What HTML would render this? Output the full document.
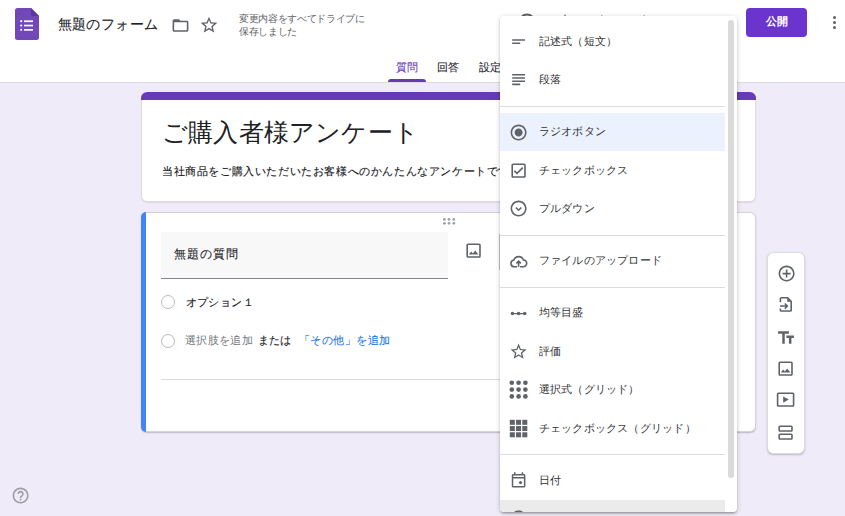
<!DOCTYPE html>
<html lang="ja">
<head>
<meta charset="utf-8">
<style>
*{box-sizing:border-box;margin:0;padding:0}
html,body{width:845px;height:516px;overflow:hidden}
body{position:relative;background:#f0ebf8;font-family:"Liberation Sans",sans-serif;color:#202124}
.abs{position:absolute}
#hdr{left:0;top:0;width:845px;height:83px;background:#fff;border-bottom:1px solid #dadce0}
.t{position:absolute;white-space:nowrap;line-height:1}
.card{position:absolute;background:#fff;border-radius:6px;border:1px solid #dadce0}
svg{position:absolute;display:block}
.ic{fill:#5f6368}
</style>
</head>
<body>
<div id="hdr" class="abs">
  <!-- forms logo -->
  <svg style="left:15px;top:8px" width="24" height="32" viewBox="0 0 24 32">
    <path d="M2.5 0H16L24 8V29.5A2.5 2.5 0 0 1 21.5 32H2.5A2.5 2.5 0 0 1 0 29.5V2.5A2.5 2.5 0 0 1 2.5 0Z" fill="#7248b9"/>
    <path d="M16 0L24 8H17.5A1.5 1.5 0 0 1 16 6.5Z" fill="#5a379e"/>
    <circle cx="6.2" cy="13.2" r="1.1" fill="#fff"/>
    <circle cx="6.2" cy="17.5" r="1.1" fill="#fff"/>
    <circle cx="6.2" cy="21.8" r="1.1" fill="#fff"/>
    <rect x="9" y="12.4" width="9" height="1.7" fill="#fff"/>
    <rect x="9" y="16.7" width="9" height="1.7" fill="#fff"/>
    <rect x="9" y="21" width="9" height="1.7" fill="#fff"/>
  </svg>
  <div class="t" style="left:57.8px;top:17px;font-size:14.4px;letter-spacing:0.35px;color:#202124;-webkit-text-stroke:0.1px #202124">無題のフォーム</div>
  <!-- folder -->
  <svg style="left:170.6px;top:15.6px" width="19" height="19" viewBox="0 0 24 24"><path class="ic" d="M20 6h-8l-2-2H4c-1.1 0-1.99.9-1.99 2L2 18c0 1.1.9 2 2 2h16c1.1 0 2-.9 2-2V8c0-1.1-.9-2-2-2zm0 12H4V8h16v10z"/></svg>
  <!-- star -->
  <svg style="left:199px;top:14.5px" width="20" height="20" viewBox="0 0 24 24"><path class="ic" d="M22 9.24l-7.19-.62L12 2 9.19 8.63 2 9.24l5.46 4.73L5.82 21 12 17.27 18.18 21l-1.63-7.03L22 9.24zM12 15.4l-3.76 2.27 1-4.28-3.32-2.88 4.38-.38L12 6.1l1.71 4.04 4.38.38-3.32 2.88 1 4.28L12 15.4z"/></svg>
  <div class="t" style="left:239px;top:11.7px;font-size:9.6px;letter-spacing:-0.33px;line-height:13px;color:#5f6368">変更内容をすべてドライブに<br>保存しました</div>
  <!-- tabs -->
  <div class="t" style="left:396px;top:61.7px;font-size:11.2px;color:#673ab7;-webkit-text-stroke:0.1px #673ab7">質問</div>
  <div class="t" style="left:437px;top:61.7px;font-size:11.2px;color:#202124;-webkit-text-stroke:0.1px #202124">回答</div>
  <div class="t" style="left:479px;top:61.7px;font-size:11.2px;color:#202124;-webkit-text-stroke:0.1px #202124">設定</div>
  <div class="abs" style="left:388px;top:79px;width:38px;height:3px;background:#673ab7;border-radius:3px 3px 0 0"></div>
  <svg style="left:515px;top:10px" width="130" height="8" viewBox="0 0 130 8"><circle cx="12" cy="12" r="7.5" fill="none" stroke="#5f6368" stroke-width="1.8"/><rect x="49" y="4.6" width="2" height="1.6" fill="#9aa0a6"/><rect x="86" y="4.8" width="1.5" height="1.4" fill="#bdc1c6"/><rect x="128.5" y="4.8" width="1.5" height="1.4" fill="#bdc1c6"/></svg>
  <!-- publish -->
  <div class="abs" style="left:746px;top:8px;width:61px;height:29px;background:#6b34cf;border-radius:4px"></div>
  <div class="t" style="left:766px;top:16.4px;font-size:11.2px;font-weight:bold;color:#fff">公開</div>
  <!-- more -->
  <div class="abs" style="left:832.5px;top:15.5px;width:3.5px;height:3.5px;border-radius:50%;background:#5f6368"></div>
  <div class="abs" style="left:832.5px;top:20.5px;width:3.5px;height:3.5px;border-radius:50%;background:#5f6368"></div>
  <div class="abs" style="left:832.5px;top:25.5px;width:3.5px;height:3.5px;border-radius:50%;background:#5f6368"></div>
</div>

<!-- title card -->
<div class="card" style="left:141px;top:92px;width:615.2px;height:109.8px;box-shadow:0 0.5px 1px rgba(0,0,0,.08)"></div>
<div class="abs" style="left:141px;top:92px;width:615.2px;height:8px;background:#673ab7;border-radius:6.4px 6.4px 0 0"></div>
<div class="t" style="left:162px;top:119.5px;font-size:25.3px;letter-spacing:0.2px">ご購入者様アンケート</div>
<div class="t" style="left:162px;top:165.9px;font-size:11.4px;letter-spacing:0.6px;-webkit-text-stroke:0.15px #202124">当社商品をご購入いただいたお客様へのかんたんなアンケートです。</div>

<!-- question card -->
<div class="card" style="left:141px;top:211.8px;width:615.2px;height:220.4px;border-color:#d3d3d8;box-shadow:0 1px 1.5px rgba(0,0,0,.22)"></div>
<div class="abs" style="left:141px;top:211.8px;width:5px;height:220.4px;background:#4285f4;border-radius:6.4px 0 0 6.4px"></div>


<div class="abs" style="left:161px;top:232px;width:287px;height:47px;background:#f8f8f8;border-bottom:1px solid #80868b"></div>
<div class="t" style="left:173.5px;top:248px;font-size:12.4px;letter-spacing:1px;-webkit-text-stroke:0.1px #202124">無題の質問</div>
<!-- drag handle -->
<svg style="left:441px;top:217px" width="16" height="9" viewBox="0 0 16 9">
  <g fill="#9aa0a6"><circle cx="3.4" cy="2.4" r="1.35"/><circle cx="8" cy="2.4" r="1.35"/><circle cx="12.8" cy="2.4" r="1.35"/><circle cx="3.4" cy="6.3" r="1.35"/><circle cx="8" cy="6.3" r="1.35"/><circle cx="12.8" cy="6.3" r="1.35"/></g>
</svg>
<!-- image icon -->
<svg style="left:464px;top:241px" width="19.2" height="19.2" viewBox="0 0 24 24"><path class="ic" d="M19 3H5c-1.1 0-2 .9-2 2v14c0 1.1.9 2 2 2h14c1.1 0 2-.9 2-2V5c0-1.1-.9-2-2-2zm0 16H5V5h14v14zm-5-7l-3 3.72L9 13l-3 4h12l-4-5z"/></svg>
<!-- radio options -->
<div class="abs" style="left:160.8px;top:294.8px;width:14.4px;height:14.4px;border:1.5px solid #bababa;border-radius:50%"></div>
<div class="t" style="left:185.5px;top:296.8px;font-size:11.2px;letter-spacing:0.42px;-webkit-text-stroke:0.12px #202124">オプション１</div>
<div class="abs" style="left:160.8px;top:333.6px;width:14.4px;height:14.4px;border:1.5px solid #bababa;border-radius:50%"></div>
<div class="t" style="left:185px;top:335.3px;font-size:11.2px;letter-spacing:0.35px;color:#70757a">選択肢を追加</div>
<div class="t" style="left:258px;top:335.3px;font-size:11.2px;-webkit-text-stroke:0.12px #202124">または</div>
<div class="t" style="left:299px;top:335.3px;font-size:11.2px;letter-spacing:0.43px;color:#1a73e8;-webkit-text-stroke:0.1px #1a73e8">「その他」を追加</div>
<div class="abs" style="left:161px;top:379px;width:575px;height:1px;background:#dadce0"></div>

<!-- help -->
<svg style="left:11px;top:485.5px" width="19.2" height="19.2" viewBox="0 0 24 24"><path fill="#9e9fa4" d="M11 18h2v-2h-2v2zm1-16C6.48 2 2 6.48 2 12s4.48 10 10 10 10-4.48 10-10S17.52 2 12 2zm0 18c-4.41 0-8-3.59-8-8s3.59-8 8-8 8 3.59 8 8-3.59 8-8 8zm0-14c-2.21 0-4 1.79-4 4h2c0-1.1.9-2 2-2s2 .9 2 2c0 2-3 1.75-3 5h2c0-2.25 3-2.5 3-5 0-2.21-1.79-4-4-4z"/></svg>

<!-- side toolbar -->
<div class="card" style="left:766.6px;top:252.4px;width:38.7px;height:201.6px;border-radius:6.4px;box-shadow:0 1px 2px rgba(60,64,67,.3)"></div>
<svg style="left:776.6px;top:263.5px" width="19.2" height="19.2" viewBox="0 0 24 24"><path class="ic" d="M13 7h-2v4H7v2h4v4h2v-4h4v-2h-4V7zm-1-5C6.49 2 2 6.49 2 12s4.49 10 10 10 10-4.49 10-10S17.51 2 12 2zm0 18c-4.41 0-8-3.59-8-8s3.59-8 8-8 8 3.59 8 8-3.59 8-8 8z"/></svg>
<svg style="left:776.4px;top:295.4px" width="19.2" height="19.2" viewBox="0 0 24 24"><g fill="none" stroke="#5f6368" stroke-width="2"><path d="M5.5 9.2V4.5a1 1 0 0 1 1-1H14.5L19 8V19a1 1 0 0 1-1 1H6.5a1 1 0 0 1-1-1V16.8"/><path d="M5 13.8H14.2M11 10.6L14.2 13.8 11 17"/></g><path d="M14 3.5V8.5H19Z" fill="#5f6368"/></svg>
<svg style="left:776px;top:327.8px" width="20" height="20" viewBox="0 0 24 24"><path class="ic" d="M2.5 4v3h5v12h3V7h5V4h-13zm19 5h-9v3h3v7h3v-7h3V9z"/></svg>
<svg style="left:776.4px;top:359.4px" width="19.2" height="19.2" viewBox="0 0 24 24"><path class="ic" d="M19 3H5c-1.1 0-2 .9-2 2v14c0 1.1.9 2 2 2h14c1.1 0 2-.9 2-2V5c0-1.1-.9-2-2-2zm0 16H5V5h14v14zm-5-7l-3 3.72L9 13l-3 4h12l-4-5z"/></svg>
<svg style="left:776.4px;top:390.4px" width="19.2" height="19.2" viewBox="0 0 24 24"><path class="ic" d="M21 3H3c-1.1 0-2 .9-2 2v14c0 1.1.9 2 2 2h18c1.1 0 2-.9 2-2V5c0-1.1-.9-2-2-2zm0 16H3V5h18v14zM9 8v8l7-4z"/></svg>
<svg style="left:776.4px;top:423.4px" width="19.2" height="19.2" viewBox="0 0 24 24"><path class="ic" d="M19 13H5c-1.1 0-2 .9-2 2v4c0 1.1.9 2 2 2h14c1.1 0 2-.9 2-2v-4c0-1.1-.9-2-2-2zm0 6H5v-4h14v4zm0-16H5c-1.1 0-2 .9-2 2v4c0 1.1.9 2 2 2h14c1.1 0 2-.9 2-2V5c0-1.1-.9-2-2-2zm0 6H5V5h14v4z"/></svg>

<div class="abs" style="left:498.6px;top:233.8px;width:1.2px;height:36px;background:#c6c6ca"></div>
<!-- MENU -->
<div id="menu" class="abs" style="left:500px;top:16px;width:237px;height:496px;background:#fff;border-radius:4px;box-shadow:0 2px 2px 0 rgba(0,0,0,.14),0 3px 1px -2px rgba(0,0,0,.12),0 1px 5px 0 rgba(0,0,0,.2);overflow:hidden">
<div style="position:absolute;left:0;top:0;width:225px;padding-top:6.4px"><div style="position:relative;height:38.4px;background:transparent"><svg style="left:9.4px;top:9.6px" width="19.2" height="19.2" viewBox="0 0 24 24"><g class="ic"><path d="M4 9h16v2H4zm0 4h10v2H4z"/></g></svg><div class="t" style="left:38.7px;top:13.4px;font-size:11.2px;letter-spacing:0.22px;color:#333437">記述式（短文）</div></div><div style="position:relative;height:38.4px;background:transparent"><svg style="left:9.4px;top:9.6px" width="19.2" height="19.2" viewBox="0 0 24 24"><g class="ic"><path d="M4 5h16v2H4zm0 4h16v2H4zm0 4h16v2H4zm0 4h10v2H4z"/></g></svg><div class="t" style="left:38.7px;top:13.4px;font-size:11.2px;letter-spacing:0.22px;color:#333437">段落</div></div><div style="height:1px;background:#dadce0;margin:6.4px 0"></div><div style="position:relative;height:38.4px;background:#ebf2fd"><svg style="left:9.4px;top:9.6px" width="19.2" height="19.2" viewBox="0 0 24 24"><g class="ic"><path d="M12 7c-2.76 0-5 2.24-5 5s2.24 5 5 5 5-2.24 5-5-2.24-5-5-5zm0-5C6.48 2 2 6.48 2 12s4.48 10 10 10 10-4.48 10-10S17.52 2 12 2zm0 18c-4.42 0-8-3.58-8-8s3.58-8 8-8 8 3.58 8 8-3.58 8-8 8z"/></g></svg><div class="t" style="left:38.7px;top:13.4px;font-size:11.2px;letter-spacing:0.22px;color:#333437">ラジオボタン</div></div><div style="position:relative;height:38.4px;background:transparent"><svg style="left:9.4px;top:9.6px" width="19.2" height="19.2" viewBox="0 0 24 24"><g class="ic"><path d="M19 3H5c-1.11 0-2 .9-2 2v14c0 1.1.89 2 2 2h14c1.11 0 2-.9 2-2V5c0-1.1-.89-2-2-2zm0 16H5V5h14v14zM17.99 9l-1.41-1.42-6.59 6.59-2.58-2.57-1.42 1.41 4 3.99z"/></g></svg><div class="t" style="left:38.7px;top:13.4px;font-size:11.2px;letter-spacing:0.22px;color:#333437">チェックボックス</div></div><div style="position:relative;height:38.4px;background:transparent"><svg style="left:9.4px;top:9.6px" width="19.2" height="19.2" viewBox="0 0 24 24"><g class="ic"><path d="M12 2C6.48 2 2 6.48 2 12s4.48 10 10 10 10-4.48 10-10S17.52 2 12 2zm0 18c-4.41 0-8-3.59-8-8s3.59-8 8-8 8 3.59 8 8-3.59 8-8 8z"/><path d="M8.6 10.6L12 14l3.4-3.4" fill="none" stroke="#5f6368" stroke-width="2"/></g></svg><div class="t" style="left:38.7px;top:13.4px;font-size:11.2px;letter-spacing:0.22px;color:#333437">プルダウン</div></div><div style="height:1px;background:#dadce0;margin:6.4px 0"></div><div style="position:relative;height:38.4px;background:transparent"><svg style="left:9.4px;top:9.6px" width="19.2" height="19.2" viewBox="0 0 24 24"><g class="ic"><path d="M10.2 18.5H6.8a4.3 4.3 0 0 1-.7-8.55A6.4 6.4 0 0 1 18.1 9.9 4.3 4.3 0 0 1 17.6 18.5H13.8" fill="none" stroke="#5f6368" stroke-width="2"/><path d="M12 18.6V11.6M9.2 14.2L12 11.4l2.8 2.8" fill="none" stroke="#5f6368" stroke-width="2"/></g></svg><div class="t" style="left:38.7px;top:13.4px;font-size:11.2px;letter-spacing:0.22px;color:#333437">ファイルのアップロード</div></div><div style="height:1px;background:#dadce0;margin:6.4px 0"></div><div style="position:relative;height:38.4px;background:transparent"><svg style="left:9.4px;top:9.6px" width="19.2" height="19.2" viewBox="0 0 24 24"><g class="ic"><path d="M4 11.25h16v1.5H4z"/><circle cx="4.3" cy="12" r="2.2"/><circle cx="12" cy="12" r="2.2"/><circle cx="19.7" cy="12" r="2.2"/></g></svg><div class="t" style="left:38.7px;top:13.4px;font-size:11.2px;letter-spacing:0.22px;color:#333437">均等目盛</div></div><div style="position:relative;height:38.4px;background:transparent"><svg style="left:9.4px;top:9.6px" width="19.2" height="19.2" viewBox="0 0 24 24"><g class="ic"><path d="M22 9.24l-7.19-.62L12 2 9.19 8.63 2 9.24l5.46 4.73L5.82 21 12 17.27 18.18 21l-1.63-7.03L22 9.24zM12 15.4l-3.76 2.27 1-4.28-3.32-2.88 4.38-.38L12 6.1l1.71 4.04 4.38.38-3.32 2.88 1 4.28L12 15.4z"/></g></svg><div class="t" style="left:38.7px;top:13.4px;font-size:11.2px;letter-spacing:0.22px;color:#333437">評価</div></div><div style="position:relative;height:38.4px;background:transparent"><svg style="left:9.4px;top:9.6px" width="19.2" height="19.2" viewBox="0 0 24 24"><g class="ic"><circle cx="3.5" cy="3.5" r="2.9"/><circle cx="3.5" cy="12" r="2.9"/><circle cx="3.5" cy="20.5" r="2.9"/><circle cx="12" cy="3.5" r="2.9"/><circle cx="12" cy="12" r="2.9"/><circle cx="12" cy="20.5" r="2.9"/><circle cx="20.5" cy="3.5" r="2.9"/><circle cx="20.5" cy="12" r="2.9"/><circle cx="20.5" cy="20.5" r="2.9"/></g></svg><div class="t" style="left:38.7px;top:13.4px;font-size:11.2px;letter-spacing:0.22px;color:#333437">選択式（グリッド）</div></div><div style="position:relative;height:38.4px;background:transparent"><svg style="left:9.4px;top:9.6px" width="19.2" height="19.2" viewBox="0 0 24 24"><g class="ic"><rect x="1" y="1" width="6.3" height="6.3"/><rect x="1" y="8.8" width="6.3" height="6.3"/><rect x="1" y="16.6" width="6.3" height="6.3"/><rect x="8.8" y="1" width="6.3" height="6.3"/><rect x="8.8" y="8.8" width="6.3" height="6.3"/><rect x="8.8" y="16.6" width="6.3" height="6.3"/><rect x="16.6" y="1" width="6.3" height="6.3"/><rect x="16.6" y="8.8" width="6.3" height="6.3"/><rect x="16.6" y="16.6" width="6.3" height="6.3"/></g></svg><div class="t" style="left:38.7px;top:13.4px;font-size:11.2px;letter-spacing:0.22px;color:#333437">チェックボックス（グリッド）</div></div><div style="height:1px;background:#dadce0;margin:6.4px 0"></div><div style="position:relative;height:38.4px;background:transparent"><svg style="left:9.4px;top:9.6px" width="19.2" height="19.2" viewBox="0 0 24 24"><g class="ic"><g transform="translate(12 11.2) scale(0.95) translate(-12 -12)"><path d="M19 4h-1V2h-2v2H8V2H6v2H5c-1.11 0-1.99.9-1.99 2L3 20c0 1.1.89 2 2 2h14c1.1 0 2-.9 2-2V6c0-1.1-.9-2-2-2zm0 16H5V10h14v10zm0-12H5V6h14v2z"/><circle cx="14.5" cy="15.5" r="2"/></g></g></svg><div class="t" style="left:38.7px;top:13.4px;font-size:11.2px;letter-spacing:0.22px;color:#333437">日付</div></div><div style="position:relative;height:38.4px;background:#ebebeb"><svg style="left:9.4px;top:9.6px" width="19.2" height="19.2" viewBox="0 0 24 24"><g class="ic"><path d="M11.99 2C6.47 2 2 6.48 2 12s4.47 10 9.99 10C17.52 22 22 17.52 22 12S17.52 2 11.99 2zM12 20c-4.42 0-8-3.58-8-8s3.58-8 8-8 8 3.58 8 8-3.58 8-8 8zm.5-13H11v6l5.25 3.15.75-1.23-4.5-2.67z"/></g></svg><div class="t" style="left:38.7px;top:13.4px;font-size:11.2px;letter-spacing:0.22px;color:#333437">時刻</div></div></div><div class="abs" style="left:228px;top:3.6px;width:6px;height:458px;background:#dadada;border-radius:3px"></div>
</div>
</body>
</html>
